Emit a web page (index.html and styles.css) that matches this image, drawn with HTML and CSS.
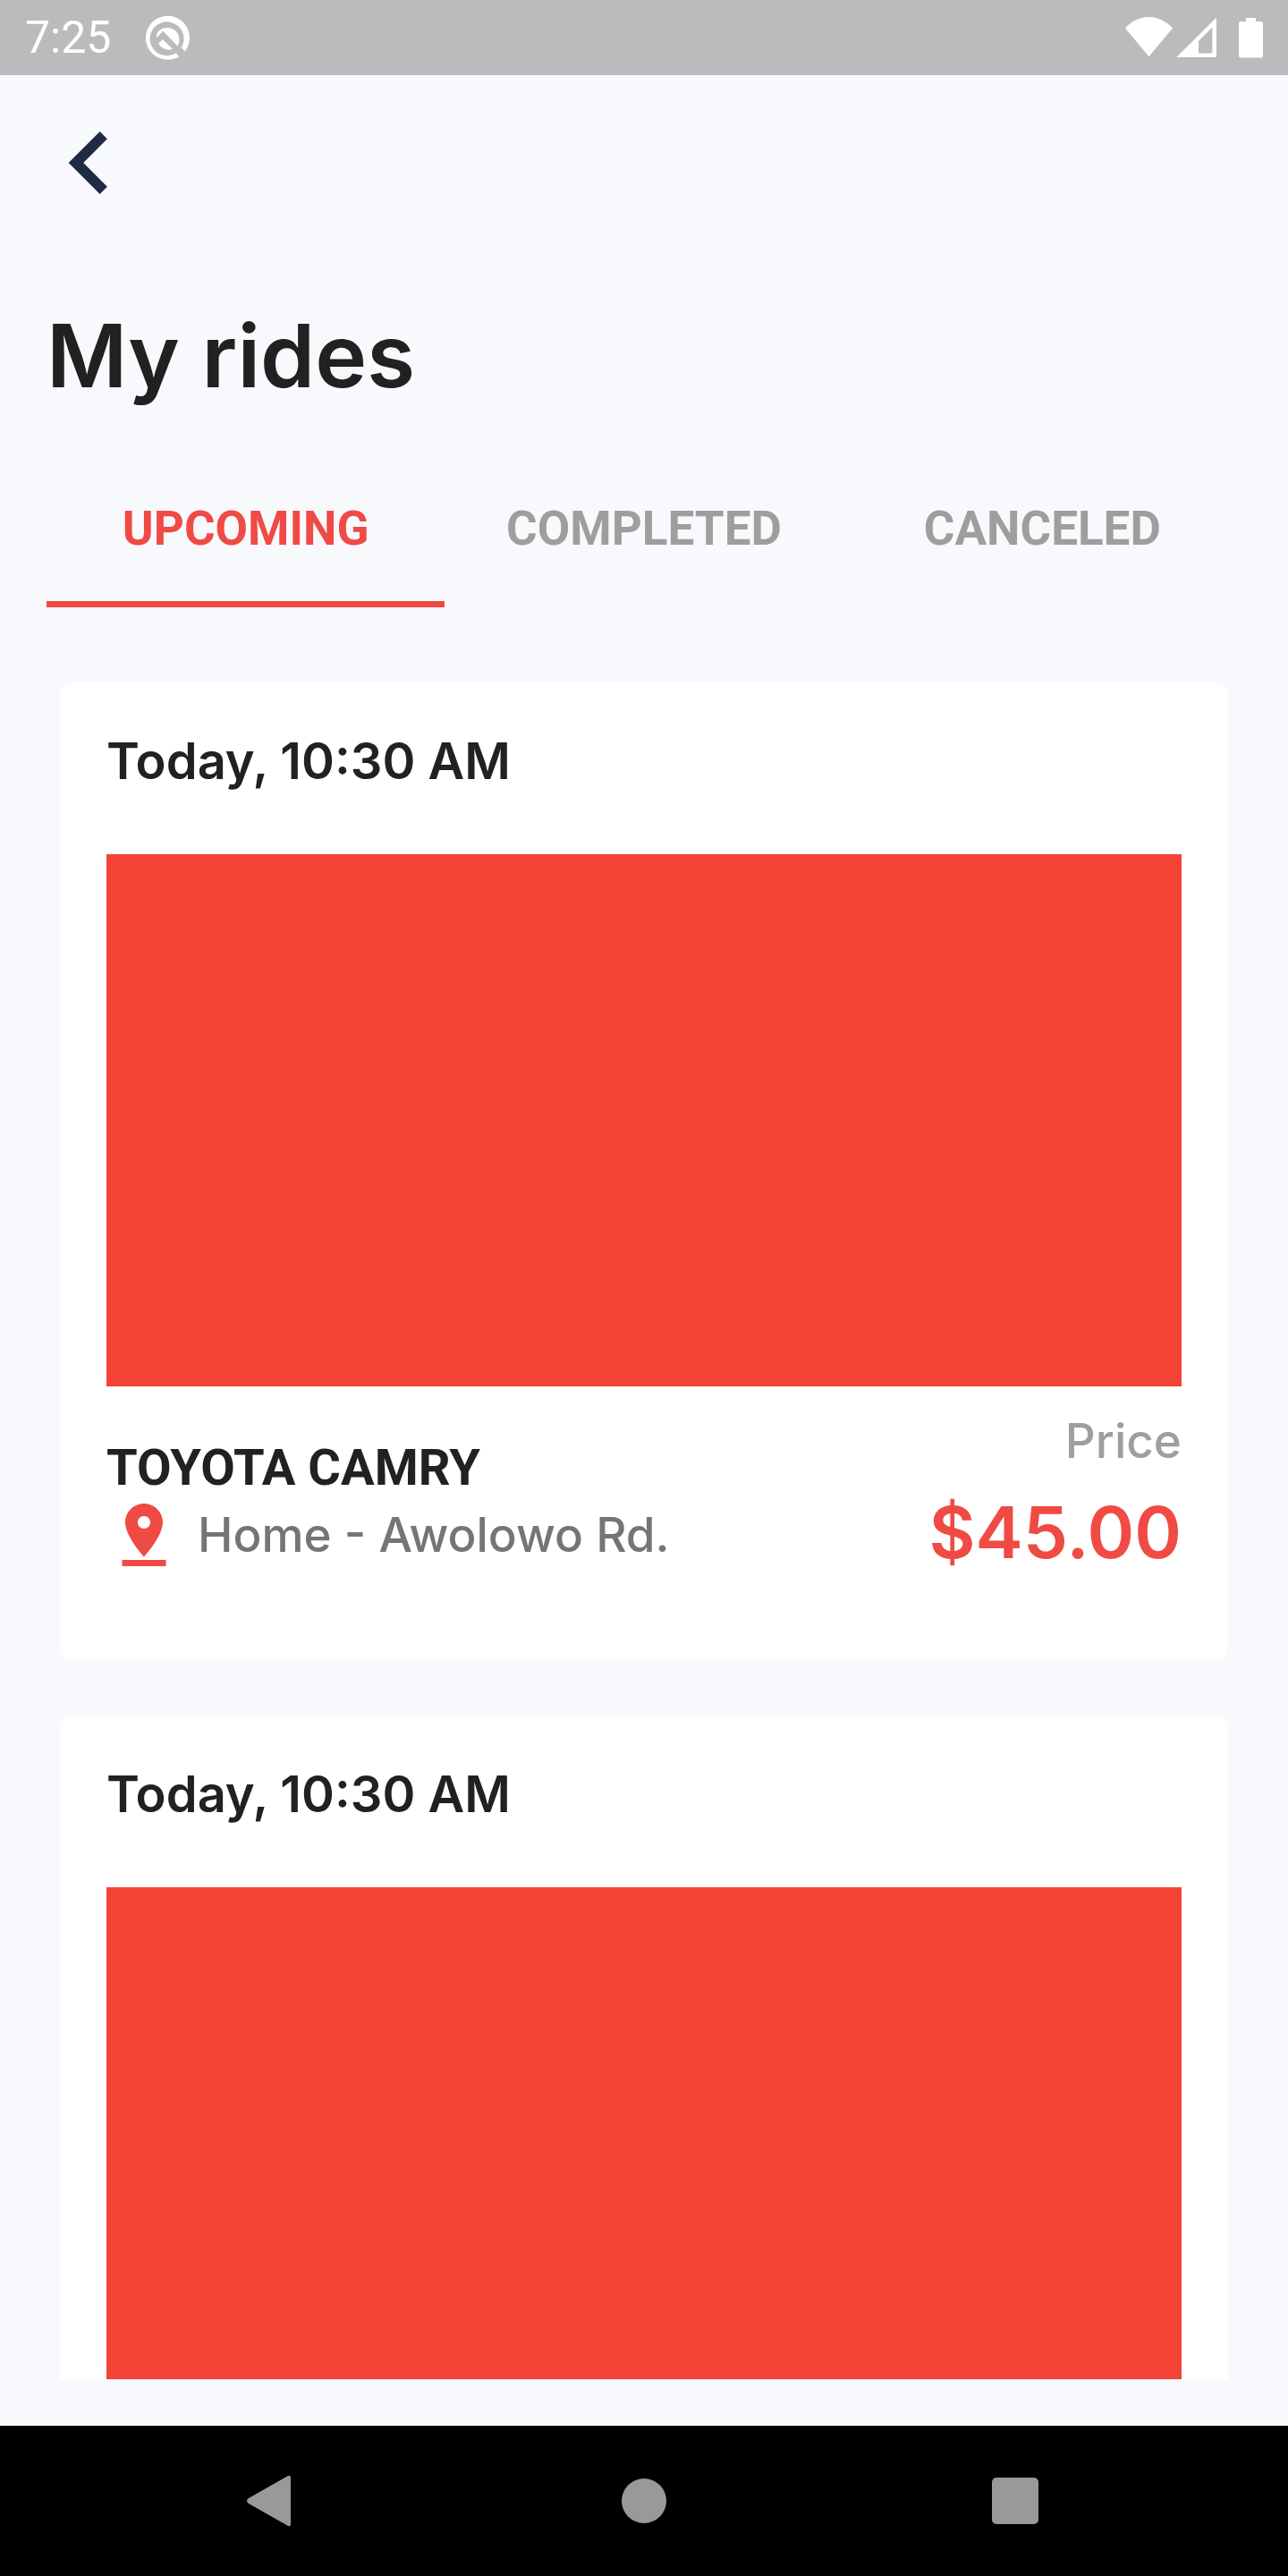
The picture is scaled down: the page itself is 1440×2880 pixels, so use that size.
FILE: index.html
```html
<!DOCTYPE html>
<html lang="en">
<head>
<meta charset="utf-8">
<meta name="viewport" content="width=device-width, initial-scale=1">
<title>My rides</title>
<link rel="stylesheet" href="styles.css">
</head>
<body>
<div class="status-bar">
  <span class="clock">7:25</span>
  <svg class="debug-icon" viewBox="0 0 50 50" aria-hidden="true">
    <path d="M43.900 40.200A24.500 24.500 0 1 0 37.100 46.300L34 42.200A19 19 0 1 1 39.600 36.500Z"/>
    <path d="M12.200 20.500A13.500 13.500 0 1 1 35.500 34.500L19 17.500L12.200 25.500Z"/>
    <path d="M14 31.800L18.800 27L30 38A13.500 13.500 0 0 1 14 31.800Z"/>
  </svg>
  <svg class="signal-icons" viewBox="0 0 154 46" aria-hidden="true">
    <path d="M0 12.500C15 -4.200 38 -4.200 53 12.500L26.500 44.300Z"/>
    <path fill-rule="evenodd" d="M102 .5V45H57.300ZM97.300 11.500L82 27V40.500H97.300Z"/>
    <path d="M135 1H146V5H151.500Q154 5 154 7.500V43Q154 45.500 151.500 45.500H129.500Q127 45.500 127 43V7.500Q127 5 129.500 5H135Z"/>
  </svg>
</div>

<main class="screen">
  <button class="back" type="button" aria-label="Back">
    <svg viewBox="0 0 24 24" aria-hidden="true"><path d="M15.410 7.410L14 6l-6 6 6 6 1.410-1.410L10.830 12z"/></svg>
  </button>
  <h1 class="title">My rides</h1>
  <div class="tabs" role="tablist">
    <button class="tab tab-active" type="button" role="tab" aria-selected="true">UPCOMING</button>
    <button class="tab" type="button" role="tab" aria-selected="false">COMPLETED</button>
    <button class="tab" type="button" role="tab" aria-selected="false">CANCELED</button>
  </div>
  <div class="rides">
    <article class="card">
      <h2 class="when">Today, 10:30 AM</h2>
      <div class="map"></div>
      <div class="details">
        <div class="trip">
          <h3 class="car">TOYOTA CAMRY</h3>
          <div class="route">
            <svg class="pin" viewBox="0 0 24 24" aria-hidden="true"><path d="M18 8c0-3.310-2.690-6-6-6S6 4.690 6 8c0 4.500 6 11 6 11s6-6.500 6-11zm-8 0c0-1.100.9-2 2-2s2 .9 2 2-.89 2-2 2c-1.100 0-2-.9-2-2zM5 20v2h14v-2H5z"/></svg>
            <span>Home - Awolowo Rd.</span>
          </div>
        </div>
        <div class="fare">
          <span class="fare-label">Price</span>
          <span class="amount">$45.00</span>
        </div>
      </div>
    </article>
    <article class="card">
      <h2 class="when">Today, 10:30 AM</h2>
      <div class="map"></div>
    </article>
  </div>
</main>

<nav class="system-nav" aria-label="System">
  <button class="nav-button" type="button" aria-label="Back"><svg viewBox="0 0 60 60"><path d="M47 2Q50 1 50 4V56Q50 59 47 58L3 33Q-1 30 3 27Z"/></svg></button>
  <button class="nav-button" type="button" aria-label="Home"><svg viewBox="0 0 60 60"><circle cx="30" cy="30" r="25"/></svg></button>
  <button class="nav-button" type="button" aria-label="Recent apps"><svg viewBox="0 0 60 60"><rect x="4" y="4" width="52" height="52" rx="5"/></svg></button>
</nav>
</body>
</html>
```
FILE: styles.css
```css
* {
  box-sizing: border-box;
}

body {
  margin: 0;
  height: 100vh;
  display: flex;
  flex-direction: column;
  background: #f8f9fd;
  color: #212121;
  font-family: Inter, "Liberation Sans", sans-serif;
}

h1, h2, h3 {
  margin: 0;
}

button {
  margin: 0;
  padding: 0;
  border: 0;
  background: none;
  color: inherit;
  cursor: pointer;
}

svg {
  display: block;
  fill: currentColor;
}

.status-bar {
  flex: none;
  display: flex;
  align-items: center;
  height: 84px;
  padding: 0 28px;
  background: #babbbd;
  color: #fff;
}

.clock {
  font: 400 50px/60px Roboto, sans-serif;
}

.debug-icon {
  width: 50px;
  height: 50px;
  margin-left: 39px;
}

.signal-icons {
  width: 154px;
  height: 46px;
  margin-left: auto;
}

.screen {
  flex: 1;
  min-height: 0;
  display: flex;
  flex-direction: column;
  padding: 28px 52px 52px;
}

.back {
  flex: none;
  width: 140px;
  height: 140px;
  margin-left: -22px;
  color: #212a44;
}

.title {
  margin-top: 84px;
  font-size: 98px;
  font-weight: 600;
  line-height: 124px;
}

.tabs {
  flex: none;
  display: grid;
  grid-template-columns: repeat(3, 1fr);
  margin-top: 46px;
}

.tab {
  height: 173px;
  padding-top: 4px;
  border-bottom: 7px solid transparent;
  color: #9e9e9e;
  font: 700 53px/60px Roboto, sans-serif;
}

.tab-active {
  border-color: #ef4b44;
  color: #ef4b44;
}

.rides {
  flex: 1;
  min-height: 0;
  display: flex;
  flex-direction: column;
  gap: 63px;
  padding: 84px 15px 0;
  overflow-y: auto;
  scrollbar-width: none;
}

.card {
  flex: none;
  padding: 52px 52px 93px;
  border-radius: 14px;
  background: #fff;
}

.when {
  font-size: 56px;
  font-weight: 600;
  line-height: 72px;
}

.map {
  height: 595px;
  margin-top: 68px;
  background: #f44336;
}

.details {
  display: flex;
  justify-content: space-between;
  padding-top: 28px;
}

.trip {
  padding-top: 30px;
}

.car {
  font: 700 56px/66px Roboto, sans-serif;
}

.route {
  display: flex;
  align-items: center;
  gap: 18px;
  color: #757575;
  font-size: 53px;
  font-weight: 500;
  line-height: 66px;
}

.pin {
  width: 84px;
  height: 84px;
  color: #ef4b44;
}

.fare {
  display: flex;
  flex-direction: column;
  align-items: flex-end;
  gap: 20px;
}

.fare-label {
  color: #9e9e9e;
  font-size: 53px;
  font-weight: 500;
  line-height: 66px;
}

.amount {
  color: #ef4b44;
  font-size: 80px;
  font-weight: 600;
  line-height: 98px;
}

.system-nav {
  flex: none;
  display: flex;
  justify-content: center;
  align-items: center;
  gap: 355px;
  height: 168px;
  background: #000;
  color: #999;
}

.nav-button svg {
  width: 60px;
  height: 60px;
}
```
